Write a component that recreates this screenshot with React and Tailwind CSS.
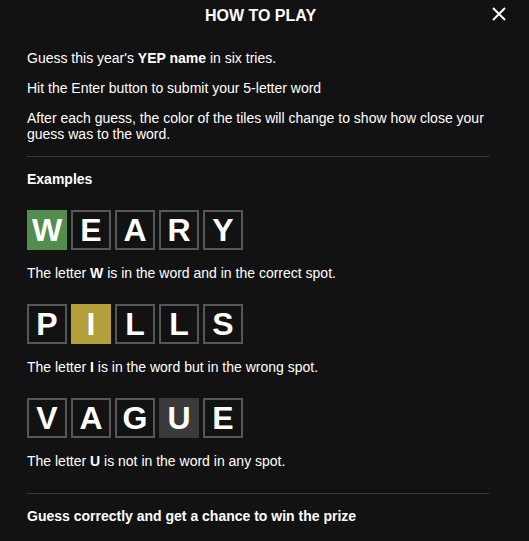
import React from "react";

// Tile colours
const tileStyles = {
  correct: "bg-[#538d4e] border-[#538d4e]",
  present: "bg-[#b59f3b] border-[#b59f3b]",
  absent: "bg-[#3a3a3c] border-[#3a3a3c]",
  empty: "bg-[#121212] border-[#565758]"
};

function Tile({ letter, state = "empty" }) {
  return (
    <div
      className={`w-10 h-10 border-2 flex items-center justify-center text-[32px] font-bold text-white leading-none ${tileStyles[state]}`}
    >
      {letter}
    </div>
  );
}

function Example({ word, marked, state, children }) {
  return (
    <div>
      <div className="flex gap-1">
        {word.split("").map((l, i) => (
          <Tile key={i} letter={l} state={i === marked ? state : "empty"} />
        ))}
      </div>
      <p className="mt-[15px] leading-4">{children}</p>
    </div>
  );
}

export default function App() {
  return (
    <div
      className="min-h-screen bg-[#121212] text-white text-sm"
      style={{ fontFamily: '"Liberation Sans", Arial, sans-serif' }}
    >
      {/* Header */}
      <div className="relative h-[33px] flex items-start justify-center pt-[7px] pr-2">
        <h1 className="text-base font-bold leading-[18px]">HOW TO PLAY</h1>
        <button className="absolute right-[22px] top-[6px] text-white">
          <svg width="16" height="16" viewBox="0 0 16 16" fill="none">
            <path d="M2 2L14 14M14 2L2 14" stroke="currentColor" strokeWidth="2" />
          </svg>
        </button>
      </div>

      {/* Body */}
      <div className="pl-[27px] pr-[40px] pt-[17px]">
        <p className="leading-4">
          Guess this year's <strong>YEP name</strong> in six tries.
        </p>
        <p className="leading-4 mt-[14px]">Hit the Enter button to submit your 5-letter word</p>
        <p className="leading-4 mt-[14px]">
          After each guess, the color of the tiles will change to show how close your guess was to the word.
        </p>

        <div className="h-px bg-[#3a3a3c] mt-[14px]" />

        <p className="leading-4 mt-[14px] font-bold">Examples</p>

        <div className="mt-[23px] flex flex-col gap-[23px]">
          <Example word="WEARY" marked={0} state="correct">
            The letter <strong>W</strong> is in the word and in the correct spot.
          </Example>
          <Example word="PILLS" marked={1} state="present">
            The letter <strong>I</strong> is in the word but in the wrong spot.
          </Example>
          <Example word="VAGUE" marked={3} state="absent">
            The letter <strong>U</strong> is not in the word in any spot.
          </Example>
        </div>

        <div className="h-px bg-[#3a3a3c] mt-6" />

        <p className="leading-4 mt-[14px] font-bold">Guess correctly and get a chance to win the prize</p>
      </div>
    </div>
  );
}
